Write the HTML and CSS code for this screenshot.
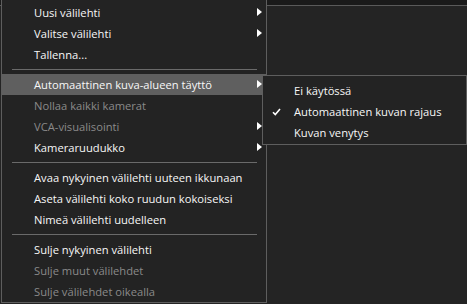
FILE: index.html
```html
<!DOCTYPE html>
<html lang="fi">
<head>
<meta charset="utf-8">
<title>Valikko</title>
<link rel="stylesheet" href="styles.css">
</head>
<body>
<div class="backdrop">
  <div class="topbar"></div>
  <div class="panel"></div>
</div>
<div class="tabstub"></div>
<div class="menu">
  <div class="item"><span>Uusi välilehti</span><i class="arrow"></i></div>
  <div class="item"><span>Valitse välilehti</span><i class="arrow"></i></div>
  <div class="item"><span>Tallenna...</span></div>
  <div class="sep"></div>
  <div class="item active"><span>Automaattinen kuva-alueen täyttö</span><i class="arrow"></i></div>
  <div class="item disabled"><span>Nollaa kaikki kamerat</span></div>
  <div class="item disabled"><span>VCA-visualisointi</span><i class="arrow"></i></div>
  <div class="item"><span>Kameraruudukko</span><i class="arrow"></i></div>
  <div class="sep"></div>
  <div class="item"><span>Avaa nykyinen välilehti uuteen ikkunaan</span></div>
  <div class="item"><span>Aseta välilehti koko ruudun kokoiseksi</span></div>
  <div class="item"><span>Nimeä välilehti uudelleen</span></div>
  <div class="sep"></div>
  <div class="item"><span>Sulje nykyinen välilehti</span></div>
  <div class="item disabled"><span>Sulje muut välilehdet</span></div>
  <div class="item disabled"><span>Sulje välilehdet oikealla</span></div>
</div>
<div class="submenu">
  <div class="sitem"><span>Ei käytössä</span></div>
  <div class="sitem"><svg class="check" width="9" height="8" viewBox="0 0 9 8"><polyline points="1,4.2 3.3,6.6 8,1" fill="none" stroke="#ffffff" stroke-width="1.6"/></svg><span>Automaattinen kuvan rajaus</span></div>
  <div class="sitem"><span>Kuvan venytys</span></div>
</div>
</body>
</html>
```
FILE: styles.css
```css
html, body {
  margin: 0;
  padding: 0;
}
body {
  width: 467px;
  height: 304px;
  overflow: hidden;
  background: #232323;
  font-family: "Open Sans", "Noto Sans", sans-serif;
  font-size: 11.2px;
  color: #f2f2f2;
  position: relative;
}
.backdrop {
  display: flex;
  flex-direction: column;
  height: 100%;
}
.topbar {
  height: 5px;
  background: #1a1a1a;
  border-bottom: 1px solid #5a5a5a;
}
.panel {
  flex: 1;
  background: #242424;
}
.tabstub {
  position: absolute;
  left: 23px;
  top: 0;
  width: 24px;
  height: 2px;
  background: linear-gradient(to right, #3a3a3a, #6a6a6a 70%, #4a4a4a);
}
.menu {
  position: absolute;
  left: 1px;
  top: -3px;
  width: 264px;
  background: #232323;
  border: 1px solid #5e5e5e;
  padding: 4px 0 0;
}
.item {
  position: relative;
  height: 21px;
  display: flex;
  align-items: center;
  padding-left: 32px;
  white-space: nowrap;
  color: #f7f7f7;
}
.item.active {
  background: #5f5f5f;
}
.item.disabled {
  color: #8a8a8a;
}
.arrow {
  position: absolute;
  right: 4px;
  top: 6px;
  width: 0;
  height: 0;
  border-left: 5px solid #ffffff;
  border-top: 4px solid transparent;
  border-bottom: 4px solid transparent;
}
.sep {
  height: 9px;
  display: flex;
  align-items: center;
  padding: 0 9px 0 10px;
}
.sep::before {
  content: "";
  flex: 1;
  border-top: 1px solid #6a6a6a;
}
.submenu {
  position: absolute;
  left: 262px;
  top: 75px;
  width: 203px;
  background: #232323;
  border: 1px solid #5e5e5e;
  padding: 4px 0 1px;
}
.sitem {
  position: relative;
  height: 21px;
  display: flex;
  align-items: center;
  padding-left: 31px;
  white-space: nowrap;
  color: #f7f7f7;
}
.check {
  position: absolute;
  left: 9px;
  top: 7px;
}
```
